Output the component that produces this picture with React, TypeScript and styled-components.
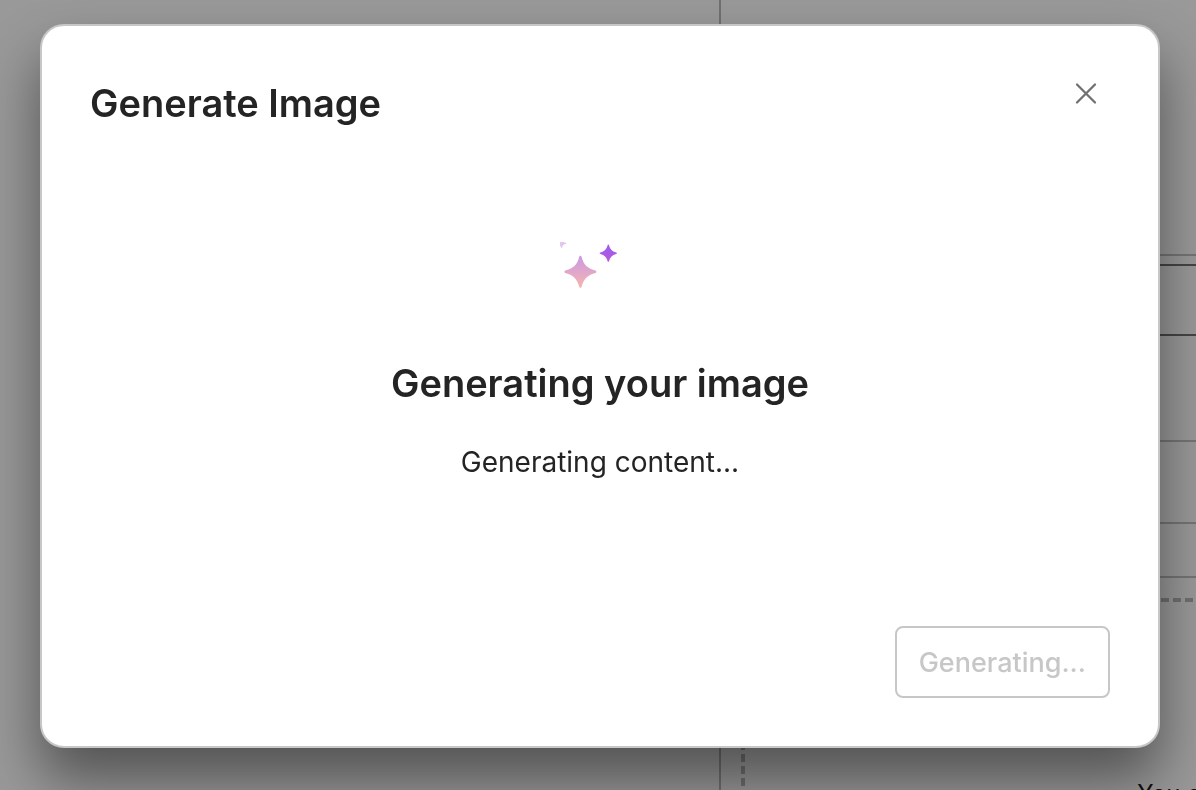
import React from "react";
import styled, { createGlobalStyle } from "styled-components";

const GlobalStyle = createGlobalStyle`
  *, *::before, *::after { box-sizing: border-box; }
  html, body, #root { height: 100%; }
  body {
    margin: 0;
    overflow: hidden;
    background: #999999;
    color: #242424;
    font-family: Inter, "Liberation Sans", sans-serif;
    -webkit-font-smoothing: antialiased;
  }
`;

const Page = styled.div`
  display: flex;
  height: 100%;
  overflow: hidden;
`;

const Preview = styled.section`
  flex: 0 0 721px;
  border-right: 2px solid #707070;
`;

const Settings = styled.section`
  flex: 1 0 924px;
  display: flex;
  flex-direction: column;
`;

const Row = styled.div<{ $height: number }>`
  flex: none;
  height: ${(p) => p.$height}px;
  border-bottom: 2px solid #757575;
`;

const Field = styled.div`
  flex: none;
  height: 72px;
  margin-top: 8px;
  border: 2px solid #454545;
`;

const DropZone = styled.div`
  flex: none;
  height: 320px;
  margin: 20px 20px 0;
  padding-top: 176px;
  border: 4px dashed #707070;
  color: #111111;
  font-size: 24px;
  line-height: 32px;
  text-align: center;
`;

const Overlay = styled.div`
  position: fixed;
  inset: 0;
  padding: 24px 36px 42px 40px;
  display: flex;
`;

const Dialog = styled.div`
  flex: 1;
  display: flex;
  flex-direction: column;
  padding: 48px;
  border: 2px solid #c7c7c7;
  border-radius: 24px;
  background: #ffffff;
  box-shadow: 0 32px 56px rgba(0, 0, 0, 0.46);
`;

const Header = styled.header`
  display: flex;
  justify-content: space-between;
  align-items: flex-start;
`;

const Title = styled.h2`
  margin: 0;
  font-size: 38px;
  font-weight: 600;
  line-height: 58px;
`;

const CloseButton = styled.button`
  display: flex;
  align-items: center;
  justify-content: center;
  width: 48px;
  height: 40px;
  padding: 0;
  border: 0;
  background: transparent;
  color: #707070;
`;

const Status = styled.div`
  flex: 1;
  display: flex;
  flex-direction: column;
  align-items: center;
  padding-top: 110px;
`;

const StatusTitle = styled(Title).attrs({ as: "h3" })`
  margin-top: 32px;
`;

const StatusText = styled.p`
  margin: 30px 0 0;
  font-size: 28px;
  line-height: 40px;
`;

const Footer = styled.footer`
  display: flex;
  justify-content: flex-end;
`;

const PrimaryButton = styled.button`
  height: 72px;
  padding: 0 22px;
  border: 2px solid #c7c7c7;
  border-radius: 8px;
  background: #ffffff;
  color: #c7c7c7;
  font-family: inherit;
  font-size: 27px;
  font-weight: 500;
`;

const STAR =
  "M0 -16C.7 -16 1.1 -15.4 1.4 -14.4C3.1 -7.4 7.4 -3.3 14.4 -1.5C15.4 -1.2 16 -.7 16 0C16 .7 15.4 1.2 14.4 1.5C7.4 3.3 3.1 7.4 1.4 14.4C1.1 15.4 .7 16 0 16C-.7 16 -1.1 15.4 -1.4 14.4C-3.1 7.4 -7.4 3.3 -14.4 1.5C-15.4 1.2 -16 .7 -16 0C-16 -.7 -15.4 -1.2 -14.4 -1.5C-7.4 -3.3 -3.1 -7.4 -1.4 -14.4C-1.1 -15.4 -.7 -16 0 -16Z";

function Sparkles() {
  return (
    <svg width="80" height="80" viewBox="0 0 80 80" aria-hidden="true">
      <defs>
        <linearGradient id="warm" x1="0" y1="0" x2="0" y2="1">
          <stop offset="0" stopColor="#cb9ae2" />
          <stop offset="0.5" stopColor="#e0a6cb" />
          <stop offset="1" stopColor="#f6b6ae" />
        </linearGradient>
        <linearGradient id="violet" x1="0" y1="0" x2="0" y2="1">
          <stop offset="0" stopColor="#9b5cf0" />
          <stop offset="1" stopColor="#b558dd" />
        </linearGradient>
      </defs>
      <path d={STAR} fill="url(#warm)" transform="translate(20.4 29.8)" />
      <path d={STAR} fill="url(#violet)" transform="translate(48.3 11.2) scale(.54)" />
      <path d={STAR} fill="#e2c6f0" transform="translate(1.6 1.4) scale(.3)" />
    </svg>
  );
}

function CloseIcon() {
  return (
    <svg width="24" height="24" viewBox="0 0 24 24" fill="none" stroke="currentColor" strokeWidth="2.3" strokeLinecap="round" aria-hidden="true">
      <path d="M3 2.5L21 20.5M21 2.5L3 20.5" />
    </svg>
  );
}

export default function App() {
  return (
    <>
      <GlobalStyle />
      <Page>
        <Preview />
        <Settings>
          <Row $height={256} />
          <Field />
          <Row $height={106} />
          <Row $height={82} />
          <Row $height={54} />
          <DropZone>You can</DropZone>
        </Settings>
      </Page>
      <Overlay>
        <Dialog role="dialog" aria-modal="true" aria-labelledby="dialog-title">
          <Header>
            <Title id="dialog-title">Generate Image</Title>
            <CloseButton type="button" aria-label="Close">
              <CloseIcon />
            </CloseButton>
          </Header>
          <Status role="status">
            <Sparkles />
            <StatusTitle>Generating your image</StatusTitle>
            <StatusText>Generating content...</StatusText>
          </Status>
          <Footer>
            <PrimaryButton type="button" disabled>
              Generating...
            </PrimaryButton>
          </Footer>
        </Dialog>
      </Overlay>
    </>
  );
}
